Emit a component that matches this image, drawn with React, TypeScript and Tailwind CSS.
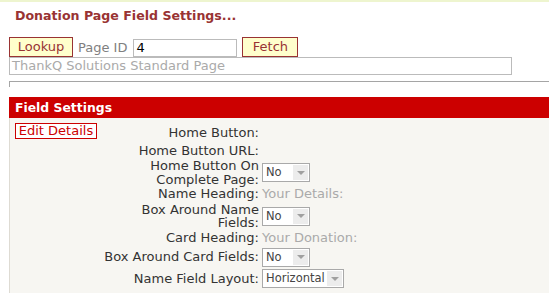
import React from "react";

function Sel({ text, w }: { text: string; w: string }) {
  return (
    <div className={`${w} h-[19px] border border-[#a9a9a9] bg-white flex items-stretch`}>
      <span className="flex-1 pl-[3px] leading-[17px] text-[11.5px] text-[#444] whitespace-nowrap overflow-hidden">{text}</span>
      <span className="w-[15px] my-[1px] mr-[1px] bg-[#ececec] flex items-center justify-center">
        <span className="w-0 h-0 border-x-[4px] border-x-transparent border-t-[4px] border-t-[#a0a0a0]" />
      </span>
    </div>
  );
}

function Row({ label, h, children }: { label: React.ReactNode; h: string; children?: React.ReactNode }) {
  return (
    <div className={`flex items-center ${h}`}>
      <div className="w-[159px] text-right leading-[13.5px] text-[#333] whitespace-nowrap">{label}</div>
      <div className="ml-[3px] flex items-center">{children}</div>
    </div>
  );
}

export default function App() {
  return (
    <div className="w-[549px] h-[293px] overflow-hidden bg-white font-['DejaVu_Sans',sans-serif] text-[13px]">
      <div className="h-[2px] bg-[#eef5cf]" />
      <div className="pl-[15px] mt-[6px] leading-[16px] font-bold text-[12.6px] text-[#993333]">Donation Page Field Settings...</div>
      <div className="pl-[9px] mt-[13px] flex items-end">
        <div className="w-[64px] h-[20px] border border-[#993333] bg-[#ffffcc] text-[#993333] text-center leading-[18px]">Lookup</div>
        <div className="ml-[5px] leading-[18px] text-[#808080]">Page ID</div>
        <div className="ml-[6px] w-[104px] h-[18px] border border-[#bbbbbb] bg-white pl-[2px] leading-[16px] text-black">4</div>
        <div className="ml-[5px] w-[56px] h-[20px] border border-[#993333] bg-[#ffffcc] text-[#993333] text-center leading-[18px]">Fetch</div>
      </div>
      <div className="ml-[9px] w-[503px] h-[18px] border border-[#bbbbbb] pl-[2px] leading-[16px] text-[#aaaaaa]">ThankQ Solutions Standard Page</div>
      <div className="ml-[9px] mt-[6px] h-[6px] border-t border-l border-[#a5a5a5]" />
      <div className="ml-[9px] mt-[10px] h-[21px] bg-[#cc0000] pl-[6px] leading-[21px] font-bold text-white text-[12.4px]">Field Settings</div>
      <div className="ml-[9px] h-[200px] bg-[#f7f6f2] border-l border-[#dedbd3] pl-[5px] pt-[5px] flex">
        <div className="w-[85px]">
          <div className="w-[82px] h-[16px] border border-[#cc0000] bg-white text-[#cc0000] text-center leading-[14px]">Edit Details</div>
        </div>
        <div className="flex flex-col">
          <Row label="Home Button:" h="h-[19px]" />
          <Row label="Home Button URL:" h="h-[18px]" />
          <Row label={<>Home Button On<br />Complete Page:</>} h="h-[25px]">
            <Sel text="No" w="w-[48px]" />
          </Row>
          <Row label="Name Heading:" h="h-[18px]">
            <span className="text-[#aaaaaa]">Your Details:</span>
          </Row>
          <Row label={<>Box Around Name<br />Fields:</>} h="h-[26px]">
            <Sel text="No" w="w-[48px]" />
          </Row>
          <Row label="Card Heading:" h="h-[18px]">
            <span className="text-[#aaaaaa]">Your Donation:</span>
          </Row>
          <Row label="Box Around Card Fields:" h="h-[20px]">
            <Sel text="No" w="w-[48px]" />
          </Row>
          <Row label="Name Field Layout:" h="h-[23px]">
            <Sel text="Horizontal" w="w-[82px]" />
          </Row>
          <Row label="Title Label:" h="h-[18px]">
            <span className="text-[#aaaaaa]">Title</span>
          </Row>
        </div>
      </div>
    </div>
  );
}
